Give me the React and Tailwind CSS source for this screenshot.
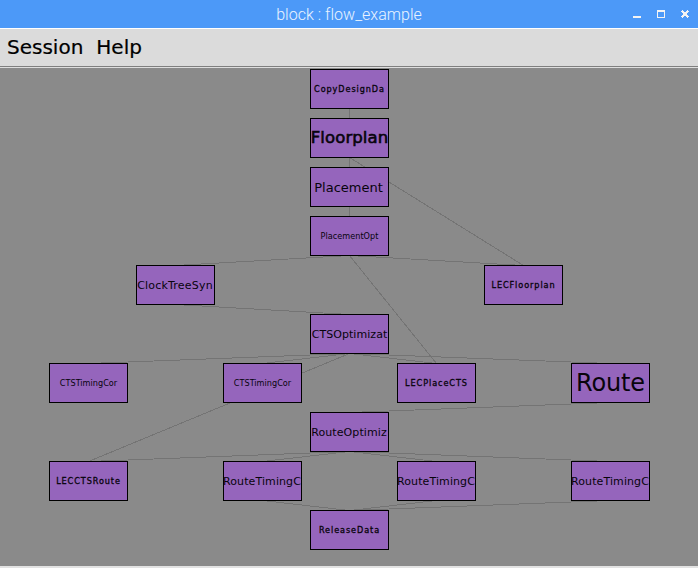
const CONDENSED = "font-['DejaVu_Sans_Condensed','DejaVu_Sans',sans-serif] [font-stretch:condensed]";
const SMALL = `${CONDENSED} text-[9px] tracking-[0.03px]`;
const SMALL_BOLD = `${CONDENSED} text-[9px] tracking-[0.93px] [-webkit-text-stroke:0.3px_#08040c]`;
const MEDIUM = "text-[11px] tracking-[0.1px] -ml-px";

const nodes = [
  { x: 310, y: 69, label: "CopyDesignDa", font: SMALL_BOLD },
  { x: 310, y: 118, label: "Floorplan", font: "text-[16.5px] tracking-[0.08px] [-webkit-text-stroke:0.6px_#08040c]" },
  { x: 310, y: 167, label: "Placement", font: "text-[13px] -ml-0.5" },
  { x: 310, y: 216, label: "PlacementOpt", font: SMALL },
  { x: 136, y: 265, label: "ClockTreeSyn", font: "text-[11px] tracking-[0.2px] -ml-px" },
  { x: 484, y: 265, label: "LECFloorplan", font: SMALL_BOLD },
  { x: 310, y: 314, label: "CTSOptimizat", font: "text-[11px] tracking-[0.06px]" },
  { x: 49, y: 363, label: "CTSTimingCor", font: SMALL },
  { x: 223, y: 363, label: "CTSTimingCor", font: SMALL },
  { x: 397, y: 363, label: "LECPlaceCTS", font: SMALL_BOLD },
  { x: 571, y: 363, label: "Route", font: "text-[24px] tracking-[-0.15px]" },
  { x: 310, y: 412, label: "RouteOptimiz", font: MEDIUM },
  { x: 49, y: 461, label: "LECCTSRoute", font: SMALL_BOLD },
  { x: 223, y: 461, label: "RouteTimingC", font: MEDIUM },
  { x: 397, y: 461, label: "RouteTimingC", font: MEDIUM },
  { x: 571, y: 461, label: "RouteTimingC", font: MEDIUM },
  { x: 310, y: 510, label: "ReleaseData", font: SMALL_BOLD },
];

// Each edge is a pair of indexes into nodes: parent, child.
const edges = [
  [0, 1], [1, 2], [1, 5], [2, 3], [3, 4], [3, 5], [3, 9], [4, 6],
  [6, 7], [6, 8], [6, 9], [6, 10], [6, 12], [10, 11],
  [11, 12], [11, 13], [11, 14], [11, 15], [13, 16], [14, 16], [15, 16],
];

function TitleBar() {
  return (
    <header className="relative flex h-7 shrink-0 items-center justify-center bg-[#4c99f8]">
      <h1 className="pt-px font-['Roboto',sans-serif] text-[16px] leading-7 font-light tracking-[0.03px] text-[#e9f3ff]">block : flow_example</h1>
      <div className="absolute top-2.5 right-[9px] flex gap-4">
        <svg className="h-2 w-2" viewBox="0 0 8 8" shapeRendering="crispEdges">
          <path d="M0 6h8v2H0z" fill="#f3f3f3" />
        </svg>
        <svg className="h-2 w-2" viewBox="0 0 8 8" shapeRendering="crispEdges">
          <path d="M0 0h8v8H0zM1 2v5h6V2z" fill="#f3f3f3" fillRule="evenodd" />
        </svg>
        <svg className="h-2 w-2" viewBox="0 0 8 8" shapeRendering="crispEdges">
          <path d="M1 0h1v1h1v1h2V1h1V0h1v1h1v1H7v1H6v2h1v1h1v1H7v1H6V7H5V6H3v1H2v1H1V7H0V6h1V5h1V3H1V2H0V1h1z" fill="#f3f3f3" />
        </svg>
      </div>
    </header>
  );
}

function Flow() {
  return (
    <main className="relative min-h-0 flex-1 overflow-hidden bg-[#8a8a8a]">
      <svg className="absolute inset-0 h-full w-full" shapeRendering="crispEdges" stroke="#747474">
        {edges.map(([a, b]) => (
          <line
            key={`${a}-${b}`}
            x1={nodes[a].x + 39.5}
            y1={nodes[a].y - 68 + 39.5}
            x2={nodes[b].x + 39.5}
            y2={nodes[b].y - 68 + 0.5}
          />
        ))}
      </svg>
      {nodes.map((n, i) => (
        <div
          key={i}
          className="absolute flex h-10 w-[79px] items-center justify-center border border-black bg-[#9565bc]"
          style={{ left: n.x, top: n.y - 68 }}
        >
          <span className={`leading-none whitespace-nowrap text-[#08040c] ${n.font}`}>{n.label}</span>
        </div>
      ))}
    </main>
  );
}

export default function App() {
  return (
    <div className="flex h-[568px] w-[698px] flex-col overflow-hidden bg-[#8a8a8a] font-['DejaVu_Sans',sans-serif]">
      <TitleBar />
      <nav className="flex h-[39px] shrink-0 items-center gap-[13px] border-t border-b border-t-white border-b-[#7f7f7f] bg-[#dbdbdb] pb-0.5 pl-[7px] text-[20px] text-black [-webkit-text-stroke:0.2px_black]">
        <span>Session</span>
        <span>Help</span>
      </nav>
      <div className="h-px shrink-0 bg-[#dedede]" />
      <Flow />
      <div className="h-0.5 shrink-0 bg-[#e2e2e2]" />
    </div>
  );
}
